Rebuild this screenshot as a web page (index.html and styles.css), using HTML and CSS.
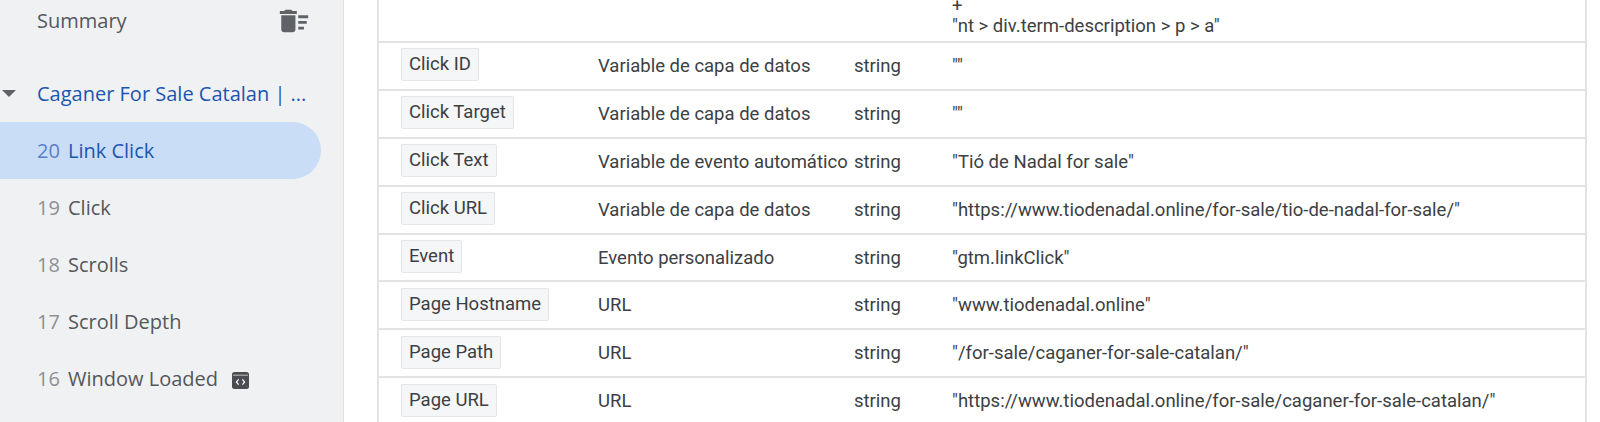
FILE: index.html
```html
<!DOCTYPE html>
<html lang="en">
<head>
    <meta charset="UTF-8">
    <title>Tag Assistant</title>
    <link rel="stylesheet" href="styles.css">
</head>
<body>
    <div class="app">
        <aside class="sidebar">
            <div class="summary">
                <span>Summary</span>
                <svg class="clear-icon" viewBox="0 0 24 24"><path d="M15 16h4v2h-4zm0-8h7v2h-7zm0 4h6v2h-6zM3 18c0 1.1.9 2 2 2h6c1.1 0 2-.9 2-2V8H3v10zM14 5h-3l-1-1H6L5 5H2v2h12z"/></svg>
            </div>
            <div class="page-title">
                <span class="caret"></span>
                <span>Caganer For Sale Catalan | ...</span>
            </div>
            <ul class="events">
                <li class="event active"><span class="num">20</span>Link Click</li>
                <li class="event"><span class="num">19</span>Click</li>
                <li class="event"><span class="num">18</span>Scrolls</li>
                <li class="event"><span class="num">17</span>Scroll Depth</li>
                <li class="event"><span class="num">16</span>Window Loaded
                    <svg class="code-icon" viewBox="0 0 17 17">
                        <rect width="17" height="17" rx="2.5" fill="#4a4d52"/>
                        <path d="M1 3.2h15" stroke="#eef0f3" stroke-width=".7"/>
                        <path d="M6.6 7.4 4.4 10l2.2 2.6M10.4 7.4l2.2 2.6-2.2 2.6" fill="none" stroke="#fff" stroke-width="1.2"/>
                    </svg>
                </li>
            </ul>
        </aside>
        <main class="content">
            <table class="vars">
                <tr class="first">
                    <td></td>
                    <td></td>
                    <td></td>
                    <td>
                        <div class="plus">+</div>
                        <div class="selector">"nt &gt; div.term-description &gt; p &gt; a"</div>
                    </td>
                </tr>
                <tr>
                    <td><span class="chip">Click ID</span></td>
                    <td>Variable de capa de datos</td>
                    <td>string</td>
                    <td>""</td>
                </tr>
                <tr>
                    <td><span class="chip">Click Target</span></td>
                    <td>Variable de capa de datos</td>
                    <td>string</td>
                    <td>""</td>
                </tr>
                <tr>
                    <td><span class="chip">Click Text</span></td>
                    <td>Variable de evento automático</td>
                    <td>string</td>
                    <td>"Tió de Nadal for sale"</td>
                </tr>
                <tr>
                    <td><span class="chip">Click URL</span></td>
                    <td>Variable de capa de datos</td>
                    <td>string</td>
                    <td>"https://www.tiodenadal.online/for-sale/tio-de-nadal-for-sale/"</td>
                </tr>
                <tr>
                    <td><span class="chip">Event</span></td>
                    <td>Evento personalizado</td>
                    <td>string</td>
                    <td>"gtm.linkClick"</td>
                </tr>
                <tr>
                    <td><span class="chip">Page Hostname</span></td>
                    <td>URL</td>
                    <td>string</td>
                    <td>"www.tiodenadal.online"</td>
                </tr>
                <tr>
                    <td><span class="chip">Page Path</span></td>
                    <td>URL</td>
                    <td>string</td>
                    <td>"/for-sale/caganer-for-sale-catalan/"</td>
                </tr>
                <tr>
                    <td><span class="chip">Page URL</span></td>
                    <td>URL</td>
                    <td>string</td>
                    <td>"https://www.tiodenadal.online/for-sale/caganer-for-sale-catalan/"</td>
                </tr>
            </table>
        </main>
    </div>
</body>
</html>
```

FILE: styles.css
```css
html, body {
    margin: 0;
    height: 422px;
    overflow: hidden;
    background-color: #fff;
}
.app {
    display: flex;
    height: 422px;
    font-family: Roboto, sans-serif;
    color: #3c4043;
}
.sidebar {
    width: 343px;
    flex-shrink: 0;
    background-color: #f0f1f3;
    border-right: 1px solid #dfe1e4;
    font-family: "Open Sans", sans-serif;
    font-size: 20px;
    color: #54575b;
}
.summary {
    display: flex;
    align-items: center;
    justify-content: space-between;
    height: 42px;
    padding: 0 32px 0 37px;
}
.summary span {
    margin-top: -2px;
}
.clear-icon {
    width: 34px;
    height: 34px;
    fill: #5f6368;
}
.page-title {
    display: flex;
    align-items: center;
    height: 38px;
    margin-top: 32px;
    margin-bottom: 10px;
    padding-left: 2px;
    color: #1a56b0;
    font-weight: 500;
}
.caret {
    width: 0;
    height: 0;
    margin-right: 21px;
    border-left: 7px solid transparent;
    border-right: 7px solid transparent;
    border-top: 7px solid #5f6368;
}
.events {
    list-style: none;
    margin: 0;
    padding: 0;
}
.event {
    display: flex;
    align-items: center;
    width: 321px;
    height: 57px;
    padding-left: 37px;
    box-sizing: border-box;
}
.event.active {
    background-color: #c9ddf7;
    border-radius: 0 29px 29px 0;
    color: #1a56b0;
}
.num {
    width: 31px;
    color: #8d9094;
}
.active .num {
    color: #5b7fc7;
}
.code-icon {
    width: 17px;
    height: 17px;
    margin-left: 14px;
    margin-top: 3px;
}
.content {
    flex: 1;
    padding: 0 13px 0 33px;
}
.vars {
    width: 100%;
    table-layout: fixed;
    border-collapse: collapse;
    border-left: 2px solid #e2e3e5;
    border-right: 2px solid #e2e3e5;
    font-size: 18.5px;
}
.vars tr {
    height: 47.9px;
    border-bottom: 2px solid #e2e3e5;
}
.vars tr.first {
    height: 41px;
}
.vars td {
    padding: 0;
    white-space: nowrap;
}
.vars td:nth-child(1) {
    width: 197px;
    padding-left: 22px;
}
.vars td:nth-child(2) {
    width: 256px;
}
.vars td:nth-child(3) {
    width: 98px;
}
.plus {
    line-height: 12px;
    margin-bottom: 4px;
}
.selector {
    line-height: 20px;
    margin-bottom: 5px;
}
.chip {
    display: inline-block;
    position: relative;
    top: -1px;
    padding: 0 7px;
    line-height: 31px;
    background-color: #f5f6f7;
    border: 1px solid #e3e5e7;
    border-radius: 2px;
}
```
